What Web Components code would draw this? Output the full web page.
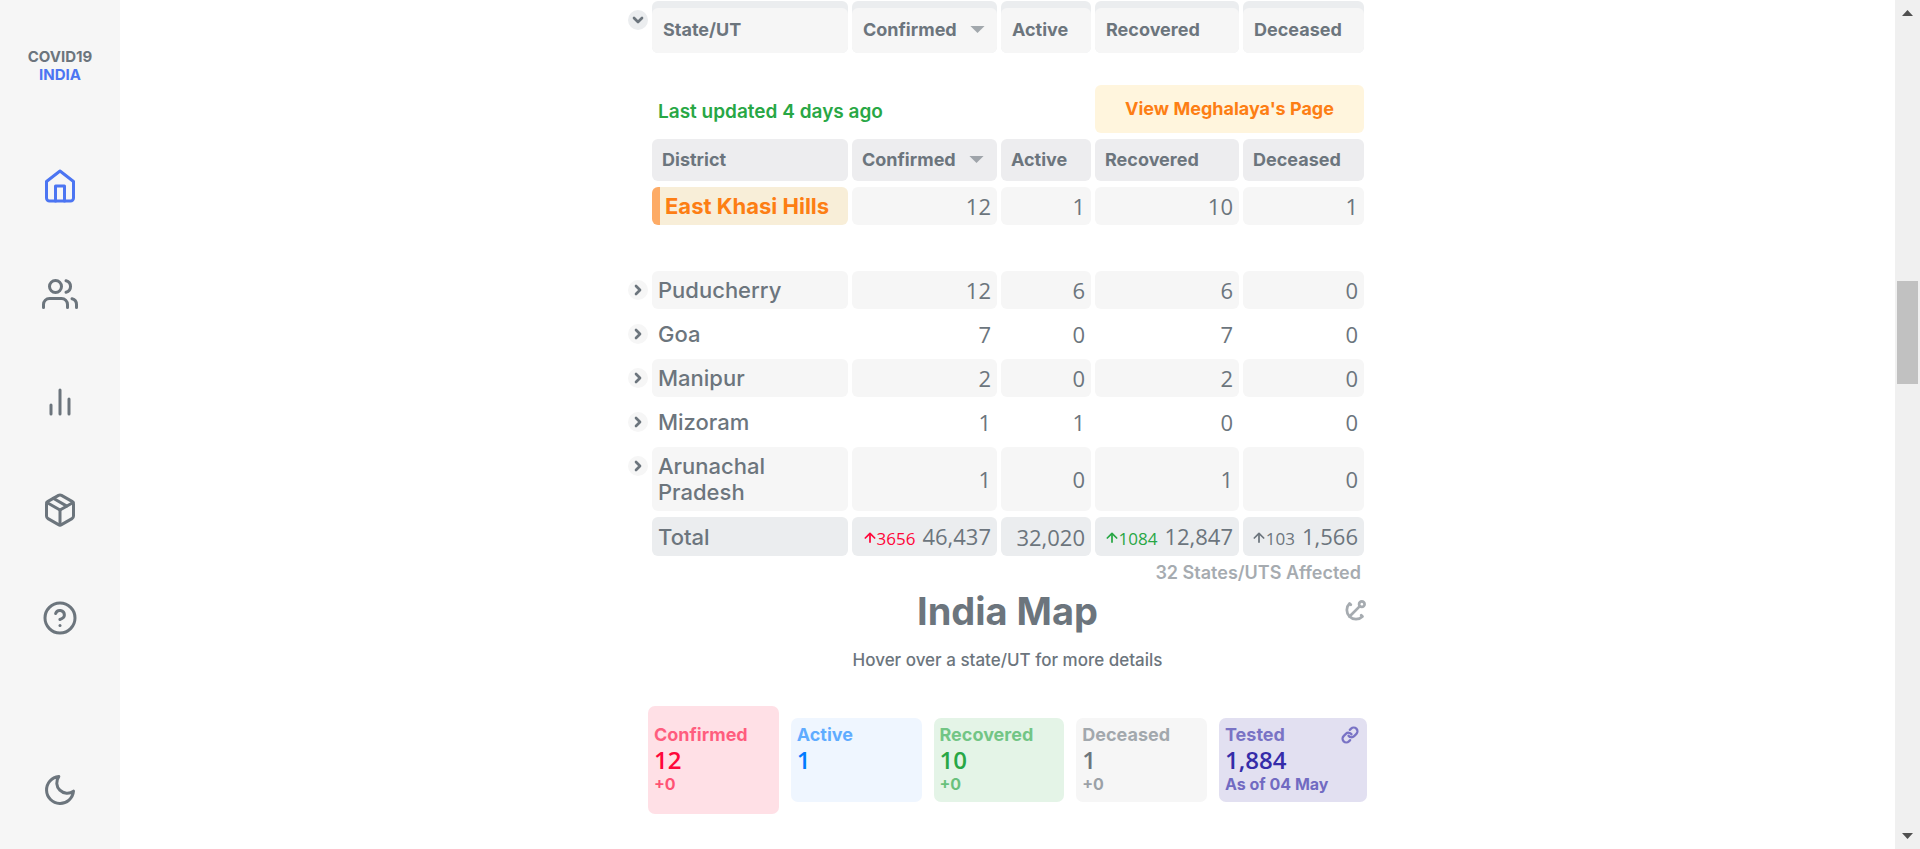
<!DOCTYPE html>
<html lang="en">
<head>
<meta charset="utf-8">
<title>COVID19 India</title>
<style>
  body {
    margin: 0;
    font-family: Inter, "Open Sans", sans-serif;
    color: #6c757d;
    background: #fff;
  }
</style>
</head>
<body>
<covid-app></covid-app>
<script>
const ICONS = {
  home: '<path d="M3 9l9-7 9 7v11a2 2 0 0 1-2 2H5a2 2 0 0 1-2-2z"/><polyline points="9 22 9 12 15 12 15 22"/>',
  users: '<path d="M17 21v-2a4 4 0 0 0-4-4H5a4 4 0 0 0-4 4v2"/><circle cx="9" cy="7" r="4"/><path d="M23 21v-2a4 4 0 0 0-3-3.87"/><path d="M16 3.13a4 4 0 0 1 0 7.75"/>',
  chart: '<line x1="18" y1="20" x2="18" y2="10"/><line x1="12" y1="20" x2="12" y2="4"/><line x1="6" y1="20" x2="6" y2="14"/>',
  package: '<line x1="16.5" y1="9.4" x2="7.5" y2="4.21"/><path d="M21 16V8a2 2 0 0 0-1-1.73l-7-4a2 2 0 0 0-2 0l-7 4A2 2 0 0 0 3 8v8a2 2 0 0 0 1 1.73l7 4a2 2 0 0 0 2 0l7-4A2 2 0 0 0 21 16z"/><polyline points="3.27 6.96 12 12.01 20.73 6.96"/><line x1="12" y1="22.08" x2="12" y2="12"/>',
  help: '<circle cx="12" cy="12" r="10"/><path d="M9.09 9a3 3 0 0 1 5.83 1c0 2-3 3-3 3"/><line x1="12" y1="17" x2="12" y2="17.01"/>',
  moon: '<path d="M21 12.79A9 9 0 1 1 11.21 3 7 7 0 0 0 21 12.79z"/>',
  link: '<path d="M10 13a5 5 0 0 0 7.54.54l3-3a5 5 0 0 0-7.07-7.07l-1.72 1.71"/><path d="M14 11a5 5 0 0 0-7.54-.54l-3 3a5 5 0 0 0 7.07 7.07l1.71-1.71"/>',
  right: '<polyline points="9 18 15 12 9 6"/>',
  down: '<polyline points="6 9 12 15 18 9"/>',
  up: '<line x1="12" y1="19" x2="12" y2="5"/><polyline points="4 12 12 4 20 12"/>',
  anchor: '<g transform="rotate(45 12 12)"><circle cx="12" cy="3" r="3"/><line x1="12" y1="22" x2="12" y2="6"/><path d="M4 12H2a10 10 0 0 0 20 0h-2"/></g>',
  sort: '<path d="M2 7h20L12 17z" fill="currentColor" stroke="none"/>',
};

class UiIcon extends HTMLElement {
  connectedCallback() {
    const width = this.getAttribute('stroke') || 2;
    this.attachShadow({ mode: 'open' }).innerHTML = `
      <style>
        :host { display: inline-block; flex: none; width: 24px; height: 24px; }
        svg { display: block; width: 100%; height: 100%; overflow: visible; }
      </style>
      <svg viewBox="0 0 24 24" fill="none" stroke="currentColor" stroke-width="${width}"
        stroke-linecap="round" stroke-linejoin="round" aria-hidden="true">${ICONS[this.getAttribute('name')]}</svg>`;
  }
}

class SideNav extends HTMLElement {
  connectedCallback() {
    const items = [['home', 'Home'], ['users', 'Demographics'], ['chart', 'Deep dive'], ['package', 'Essentials'], ['help', 'About']];
    this.attachShadow({ mode: 'open' }).innerHTML = `
      <style>
        :host {
          display: flex; flex-direction: column; align-items: center; box-sizing: border-box;
          padding: 48px 0 41px; background: #f6f6f6;
        }
        .brand {
          font-weight: 700; font-size: 15px; line-height: 18px; text-align: center;
          color: inherit; text-decoration: none;
        }
        .brand span { display: block; }
        .brand .india { color: #4c75f2; }
        nav { display: flex; flex-direction: column; gap: 72px; margin-top: 84px; }
        nav a { display: block; color: #6c757d; }
        nav a.active { color: #4c75f2; }
        ui-icon { display: block; width: 36px; height: 36px; }
        button { margin: auto 0 0; padding: 0; border: 0; background: none; color: #6c757d; }
      </style>
      <a class="brand" href="#"><span>COVID19</span><span class="india">INDIA</span></a>
      <nav>${items.map(([icon, label], i) => `
        <a href="#${icon}" aria-label="${label}" class="${i ? '' : 'active'}"><ui-icon name="${icon}"></ui-icon></a>`).join('')}
      </nav>
      <button aria-label="Dark mode"><ui-icon name="moon"></ui-icon></button>`;
  }
}

class StateTable extends HTMLElement {
  connectedCallback() {
    const columns = ['Confirmed', 'Active', 'Recovered', 'Deceased'];
    const states = [
      ['Puducherry', 12, 6, 6, 0],
      ['Goa', 7, 0, 7, 0],
      ['Manipur', 2, 0, 2, 0],
      ['Mizoram', 1, 1, 0, 0],
      ['Arunachal Pradesh', 1, 0, 1, 0],
    ];
    const head = first => [first, ...columns].map(label => `
      <th scope="col"><button>${label}${label === 'Confirmed' ? '<ui-icon name="sort"></ui-icon>' : ''}</button></th>`).join('');
    const delta = (kind, n) => `<span class="delta ${kind}"><ui-icon name="up" stroke="3"></ui-icon>${n}</span>`;
    const toggle = (icon, label) => `<td class="toggle"><button aria-label="${label}"><ui-icon name="${icon}" stroke="4"></ui-icon></button></td>`;

    this.attachShadow({ mode: 'open' }).innerHTML = `
      <style>
        :host { display: block; margin: -5px -1px 0 -24px; }
        table { width: 100%; table-layout: fixed; border-collapse: separate; border-spacing: 4px 6px; }
        col.c0 { width: 20px; }
        col.c2 { width: 145px; }
        col.c3 { width: 90px; }
        col.c4 { width: 144px; }
        col.c5 { width: 121px; }
        th, td { padding: 0; }
        button { font: inherit; color: inherit; border: 0; padding: 0; }
        th { border-radius: 6px; background: #ededef; text-align: left; font-size: 18px; font-weight: 700; }
        th button {
          display: flex; align-items: center; gap: 12px; box-sizing: border-box;
          width: 100%; height: 42px; padding: 0 10px 2px; border-radius: 6px; background: none;
        }
        th ui-icon { width: 17px; height: 17px; opacity: .6; }
        .main th { padding-top: 7px; background: #ebedef; }
        .main th button { height: 45px; padding-left: 11px; background: #f6f6f6; }
        .toggle { vertical-align: top; padding-top: 9px; }
        .toggle button {
          display: flex; align-items: center; justify-content: center;
          width: 20px; height: 20px; border-radius: 50%; background: #f6f6f6;
        }
        .main .toggle button { background: #ebedef; }
        .toggle ui-icon { width: 16px; height: 16px; }
        .note { vertical-align: bottom; padding: 0 6px 9px; color: #28a745; font-size: 19px; line-height: 24px; font-weight: 600; }
        .page { height: 74px; vertical-align: bottom; }
        .page a {
          display: block; border-radius: 6px; background: #fff5dd; color: #fd7e14;
          font-size: 18px; line-height: 48px; font-weight: 700; text-align: center; text-decoration: none;
        }
        .num, .name { border-radius: 6px; padding: 6px; font-size: 22px; line-height: 26px; }
        .num { text-align: right; font-family: "Open Sans", sans-serif; white-space: nowrap; }
        .name { font-weight: 500; text-align: left; background: none; }
        .shade .num, .shade .name { background: #f6f6f6; }
        .district .name {
          padding-left: 13px; font-weight: 700; color: #fd7e14;
          background: linear-gradient(90deg, #fdab66 8px, #f8eed8 8px);
        }
        .gap td { height: 34px; }
        .total .num, .total .name { background: #ebedef; }
        .total .num { line-height: 24px; padding: 7px 6px; }
        .delta { margin-right: 7px; font-size: 17px; line-height: 20px; }
        .delta ui-icon { width: 14px; height: 14px; vertical-align: 0; }
        .red { color: #ff073a; }
        .green { color: #28a745; }
      </style>
      <table>
        <colgroup><col class="c0"><col><col class="c2"><col class="c3"><col class="c4"><col class="c5"></colgroup>
        <tr class="main">${toggle('down', 'Collapse Meghalaya')}${head('State/UT')}</tr>
        <tr><td></td><td class="note" colspan="3">Last updated 4 days ago</td>
          <td class="page" colspan="2"><a href="#meghalaya">View Meghalaya's Page</a></td></tr>
        <tr><td></td>${head('District')}</tr>
        <tr class="shade district"><td></td><th class="name" scope="row">East Khasi Hills</th>
          <td class="num">12</td><td class="num">1</td><td class="num">10</td><td class="num">1</td></tr>
        <tr class="gap"><td colspan="6"></td></tr>
        ${states.map(([name, ...nums], i) => `
          <tr class="${i % 2 ? '' : 'shade'}">${toggle('right', 'Expand ' + name)}
            <th class="name" scope="row">${name}</th>${nums.map(n => `<td class="num">${n}</td>`).join('')}</tr>`).join('')}
        <tr class="total"><td></td><th class="name" scope="row">Total</th>
          <td class="num">${delta('red', '3656')}46,437</td>
          <td class="num">32,020</td>
          <td class="num">${delta('green', '1084')}12,847</td>
          <td class="num">${delta('', '103')}1,566</td></tr>
      </table>`;
  }
}

class StatCard extends HTMLElement {
  connectedCallback() {
    this.attachShadow({ mode: 'open' }).innerHTML = `
      <style>
        :host {
          display: flex; flex-direction: column; box-sizing: border-box;
          padding: 5px 6px 7px; border-radius: 7px; font-weight: 700;
          background: var(--tint); color: var(--tone);
        }
        :host([selected]) { padding-top: 17px; padding-bottom: 19px; }
        .label { font-size: 18px; line-height: 24px; opacity: .6; display: flex; justify-content: space-between; align-items: center; }
        .value { font-family: "Open Sans", sans-serif; font-weight: 600; font-size: 24px; line-height: 26px; }
        .change { font-size: 16px; line-height: 22px; min-height: 22px; opacity: .65; }
      </style>
      <div class="label">${this.getAttribute('label')}<slot name="action"></slot></div>
      <div class="value">${this.getAttribute('value')}</div>
      <div class="change">${this.getAttribute('change') || ''}</div>`;
  }
}

class MapSection extends HTMLElement {
  connectedCallback() {
    this.attachShadow({ mode: 'open' }).innerHTML = `
      <style>
        :host { display: block; }
        header { display: grid; grid-template-columns: 1fr auto 1fr; align-items: center; margin-top: 4px; }
        h1 { grid-column: 2; margin: 0; font-size: 38px; line-height: 46px; font-weight: 700; }
        header button { justify-self: end; display: flex; padding: 0 0 2px; border: 0; background: none; color: #6c757d; opacity: .6; }
        header ui-icon { width: 22px; height: 22px; }
        p { margin: 14px 0 0; text-align: center; font-size: 17px; line-height: 24px; font-weight: 500; }
        .cards { display: grid; grid-template-columns: repeat(4, 1fr) 148px; gap: 12px; align-items: center; margin-top: 34px; }
        .confirmed { --tint: #ffe0e6; --tone: #ff073a; }
        .active { --tint: #eff6ff; --tone: #007bff; }
        .recovered { --tint: #e4f4e7; --tone: #28a745; }
        .deceased { --tint: #f6f6f6; --tone: #6c757d; }
        .tested { --tint: #e2e0f1; --tone: #352ca9; }
        .tested a { display: flex; padding-right: 2px; color: inherit; }
        .tested ui-icon { width: 18px; height: 18px; }
      </style>
      <header><h1>India Map</h1><button aria-label="Anchor map"><ui-icon name="anchor" stroke="3"></ui-icon></button></header>
      <p>Hover over a state/UT for more details</p>
      <div class="cards">
        <stat-card class="confirmed" selected label="Confirmed" value="12" change="+0"></stat-card>
        <stat-card class="active" label="Active" value="1"></stat-card>
        <stat-card class="recovered" label="Recovered" value="10" change="+0"></stat-card>
        <stat-card class="deceased" label="Deceased" value="1" change="+0"></stat-card>
        <stat-card class="tested" label="Tested" value="1,884" change="As of 04 May"><a slot="action" href="#source" aria-label="Source"><ui-icon name="link" stroke="3"></ui-icon></a></stat-card>
      </div>`;
  }
}

class ScrollTrack extends HTMLElement {
  connectedCallback() {
    this.attachShadow({ mode: 'open' }).innerHTML = `
      <style>
        :host { display: flex; flex-direction: column; align-items: center; box-sizing: border-box; padding: 10px 0; background: #f0f0f0; }
        svg { display: block; width: 11px; height: 6px; fill: #505050; }
        .rail { flex: 1; display: flex; flex-direction: column; }
        .before { flex: 265; }
        .thumb { flex: 103; width: 21px; background: #c1c1c1; }
        .after { flex: 449; }
      </style>
      <svg viewBox="0 0 22 12"><path d="M0 12L11 0L22 12z"/></svg>
      <div class="rail"><div class="before"></div><div class="thumb"></div><div class="after"></div></div>
      <svg viewBox="0 0 22 12"><path d="M0 0L11 12L22 0z"/></svg>`;
  }
}

class CovidApp extends HTMLElement {
  connectedCallback() {
    this.attachShadow({ mode: 'open' }).innerHTML = `
      <style>
        :host { display: grid; grid-template-columns: 120px 1fr 25px; height: 100vh; overflow: hidden; }
        main { overflow: hidden; display: flex; justify-content: center; }
        .column { width: 100%; max-width: 719px; }
        .affected { padding: 0 6px; text-align: right; font-size: 18px; line-height: 22px; font-weight: 600; opacity: .6; }
      </style>
      <side-nav></side-nav>
      <main><div class="column">
        <state-table></state-table>
        <div class="affected">32 States/UTS Affected</div>
        <map-section></map-section>
      </div></main>
      <scroll-track></scroll-track>`;
  }
}

customElements.define('ui-icon', UiIcon);
customElements.define('side-nav', SideNav);
customElements.define('state-table', StateTable);
customElements.define('stat-card', StatCard);
customElements.define('map-section', MapSection);
customElements.define('scroll-track', ScrollTrack);
customElements.define('covid-app', CovidApp);
</script>
</body>
</html>
